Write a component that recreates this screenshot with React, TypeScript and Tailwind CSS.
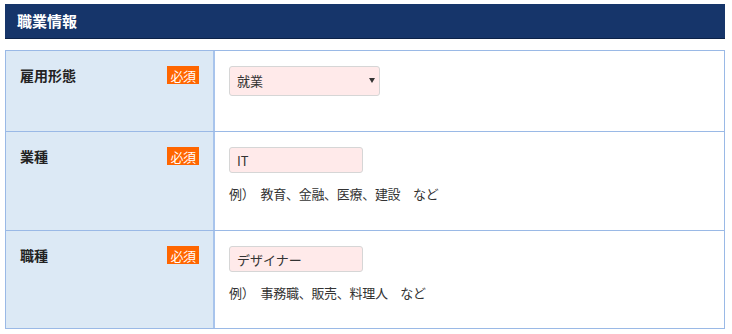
import { useState } from 'react';

type Row = {
  label: string;
  kind: 'select' | 'text';
  value: string;
  hint?: string;
};

const rows: Row[] = [
  { label: '雇用形態', kind: 'select', value: '就業' },
  { label: '業種', kind: 'text', value: 'IT', hint: '例）　教育、金融、医療、建設　など' },
  { label: '職種', kind: 'text', value: 'デザイナー', hint: '例）　事務職、販売、料理人　など' },
];

const rowHeights = ['h-[80px]', 'h-[99px]', 'h-[98px]'];

const font = { fontFamily: '"Noto Sans CJK JP", "Liberation Sans", sans-serif' };

function Badge() {
  return (
    <span className="flex h-[18px] w-[32px] shrink-0 items-center justify-center bg-[#ff6600] text-[13px] leading-none tracking-[-0.5px] text-white">
      必須
    </span>
  );
}

function Field({ row }: { row: Row }) {
  const [value, setValue] = useState(row.value);

  if (row.kind === 'select') {
    return (
      <div className="relative h-[30px] w-[151px]">
        <select
          value={value}
          onChange={(e) => setValue(e.target.value)}
          className="h-full w-full appearance-none rounded-[3px] border border-[#d6d6d6] bg-[#ffeaea] pl-[7px] text-[13px] text-[#333] outline-none"
        >
          <option>就業</option>
          <option>正社員</option>
          <option>アルバイト</option>
        </select>
        <span className="pointer-events-none absolute right-[5px] top-[12px] h-0 w-0 border-x-[3px] border-t-[5px] border-x-transparent border-t-[#333]" />
      </div>
    );
  }

  return (
    <input
      value={value}
      onChange={(e) => setValue(e.target.value)}
      className="h-[26px] w-[134px] rounded-[3px] border border-[#d6d6d6] bg-[#ffeaea] px-[7px] text-[13px] text-[#333] outline-none"
    />
  );
}

export default function App() {
  return (
    <div className="min-h-[334px] w-[732px] bg-white px-[5px] pt-[4px]" style={font}>
      <div className="flex h-[34px] w-[720px] items-center bg-[#16356a] pl-[12px] text-[15px] font-bold text-white shadow-[0_1px_0_#0c2248]">
        職業情報
      </div>

      <div className="mt-[12px] w-[720px] border border-[#9ab9e6]">
        {rows.map((row, i) => (
          <div
            key={row.label}
            className={`flex ${rowHeights[i]} ${i > 0 ? 'border-t border-[#9ab9e6]' : ''}`}
          >
            <div className="flex w-[209px] shrink-0 items-start justify-between border-r-2 border-[#a8c4ec] bg-[#dce9f5] pl-[14px] pr-[14px] pt-[15px]">
              <span className="text-[14px] font-bold leading-[18px] text-[#222]">{row.label}</span>
              <Badge />
            </div>
            <div className="flex flex-col pl-[14px] pt-[15px]">
              <Field row={row} />
              {row.hint && (
                <p className="mt-[11px] text-[13px] tracking-[-0.3px] text-[#333]">{row.hint}</p>
              )}
            </div>
          </div>
        ))}
      </div>
    </div>
  );
}
